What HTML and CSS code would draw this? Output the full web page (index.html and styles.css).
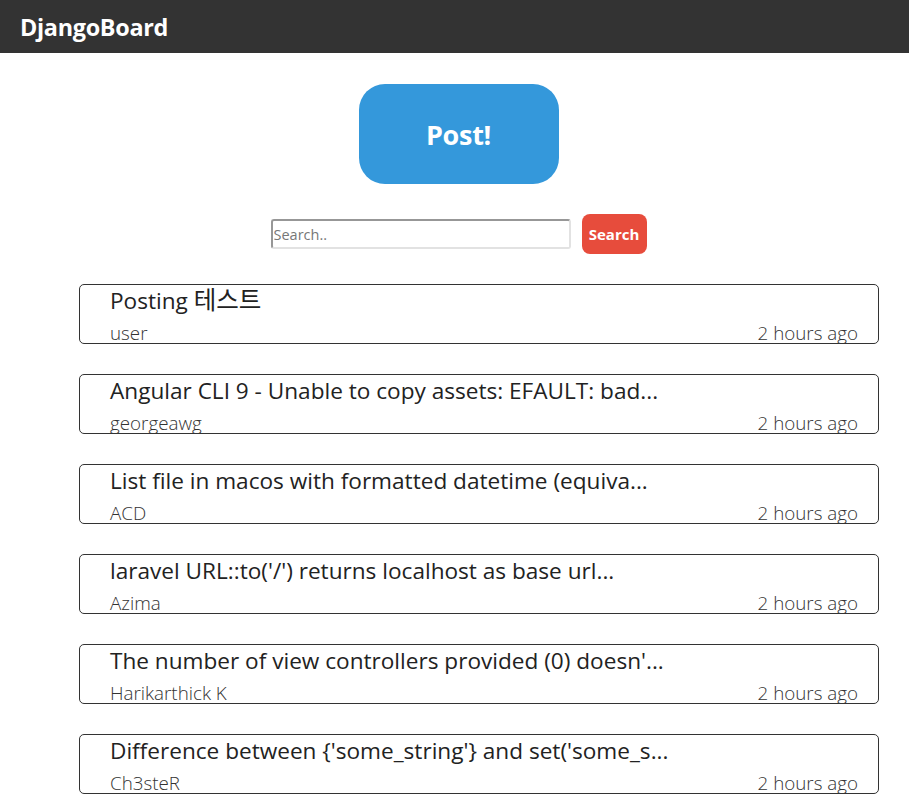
FILE: index.html
```html
<!DOCTYPE html>
<html>
<head>
<meta charset="utf-8">
<title>DjangoBoard</title>
<link rel="stylesheet" href="styles.css">
</head>
<body>
<header class="topbar">
  <span class="brand">DjangoBoard</span>
</header>
<main class="content">
  <div class="post-wrap">
    <button class="post-btn">Post!</button>
  </div>
  <form class="search-row">
    <input class="search-input" type="text" placeholder="Search..">
    <button class="search-btn" type="button">Search</button>
  </form>
  <ul class="post-list">
    <li class="card">
      <div class="card-title">Posting <span class="ko">테스트</span></div>
      <div class="card-meta"><span class="author">user</span><span class="time">2 hours ago</span></div>
    </li>
    <li class="card">
      <div class="card-title">Angular CLI 9 - Unable to copy assets: EFAULT: bad...</div>
      <div class="card-meta"><span class="author">georgeawg</span><span class="time">2 hours ago</span></div>
    </li>
    <li class="card">
      <div class="card-title">List file in macos with formatted datetime (equiva...</div>
      <div class="card-meta"><span class="author">ACD</span><span class="time">2 hours ago</span></div>
    </li>
    <li class="card">
      <div class="card-title">laravel URL::to('/') returns localhost as base url...</div>
      <div class="card-meta"><span class="author">Azima</span><span class="time">2 hours ago</span></div>
    </li>
    <li class="card">
      <div class="card-title">The number of view controllers provided (0) doesn'...</div>
      <div class="card-meta"><span class="author">Harikarthick K</span><span class="time">2 hours ago</span></div>
    </li>
    <li class="card">
      <div class="card-title">Difference between {'some_string'} and set('some_s...</div>
      <div class="card-meta"><span class="author">Ch3steR</span><span class="time">2 hours ago</span></div>
    </li>
  </ul>
</main>
</body>
</html>
```
FILE: styles.css
```css
* { box-sizing: border-box; }
html, body { margin: 0; padding: 0; background: #fff; }
body {
  font-family: "Open Sans", "Noto Sans CJK KR", sans-serif;
  color: #222;
  overflow: hidden;
}
.topbar {
  height: 53px;
  background: #333333;
  display: flex;
  align-items: center;
  padding-left: 20px;
}
.brand {
  color: #fff;
  font-weight: 700;
  font-size: 23.4px;
  letter-spacing: -0.3px;
}
.content {
  padding-left: 8px;
  display: flex;
  flex-direction: column;
  align-items: center;
}
.post-wrap { margin-top: 31px; }
.post-btn {
  width: 200px;
  height: 100px;
  border: none;
  border-radius: 26px;
  background: #3498db;
  color: #fff;
  font-family: "Open Sans", sans-serif;
  font-weight: 700;
  font-size: 27px;
  letter-spacing: -0.3px;
  padding: 0;
}
.search-row {
  margin: 30px 0 0;
  display: flex;
  align-items: center;
  gap: 11px;
}
.search-input {
  width: 300px;
  height: 30px;
  border: 2px solid #e2e2e2;
  border-top-color: #979797;
  border-left-color: #979797;
  border-radius: 3px;
  padding: 1px 1px 0;
  font-family: "Open Sans", sans-serif;
  font-size: 14.5px;
  outline: none;
}
.search-input::placeholder { color: #777; }
.search-btn {
  width: 65px;
  height: 40px;
  border: none;
  border-radius: 8px;
  background: #e74c3c;
  color: #fff;
  font-family: "Open Sans", sans-serif;
  font-weight: 700;
  font-size: 15px;
  padding: 0;
}
.post-list {
  list-style: none;
  margin: 30px 0 0;
  padding: 0;
  align-self: stretch;
  display: flex;
  flex-direction: column;
  gap: 30px;
}
.card {
  margin-left: 71px;
  width: 800px;
  height: 60px;
  border: 1px solid #333;
  border-radius: 5px;
  padding: 0 20px 0 30px;
  color: #222;
}
.card-title {
  font-size: 22.6px;
  line-height: 32px;
  white-space: nowrap;
}
.ko {
  font-family: "Noto Sans CJK KR", sans-serif;
  font-size: 24.5px;
  line-height: 1;
}
.card-meta {
  display: flex;
  justify-content: space-between;
  font-size: 18.8px;
  font-weight: 300;
  line-height: 33px;
  color: #333;
}
```
